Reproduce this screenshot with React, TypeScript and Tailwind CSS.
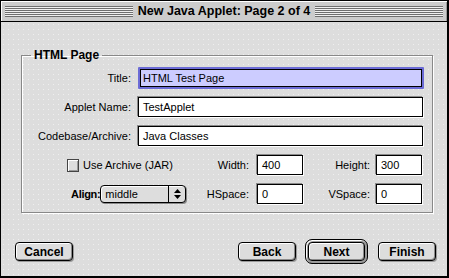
import { FC, ReactNode } from "react";

const sans = "font-['Liberation_Sans',Arial,sans-serif]";

const Stripes: FC = () => (
  <div className="flex-1 h-[11px] bg-[repeating-linear-gradient(to_bottom,#6f6f6f_0px,#6f6f6f_1px,#f0f0f0_1px,#f0f0f0_2px)]" />
);

interface FieldProps {
  value: string;
  className: string;
}

const Field: FC<FieldProps> = ({ value, className }) => (
  <div
    className={`h-[20px] border border-black bg-white shadow-[-1px_-1px_0_#8a8a8a,1px_1px_0_#ffffff] flex items-center pl-[4px] text-[11px] text-black ${className}`}
  >
    {value}
  </div>
);

const Label: FC<{ children: ReactNode; className: string }> = ({ children, className }) => (
  <div className={`text-right text-[11px] text-black ${className}`}>{children}</div>
);

interface ButtonProps {
  label: string;
  className: string;
}

const MacButton: FC<ButtonProps> = ({ label, className }) => (
  <div
    className={`h-[19px] border border-black rounded-[4px] bg-[#dddddd] shadow-[inset_1px_1px_0_#ffffff,inset_-1px_-1px_0_#8a8a8a,1px_1px_0_#9a9a9a] flex items-center justify-center font-bold text-[12px] text-black ${className}`}
  >
    {label}
  </div>
);

export default function App() {
  return (
    <div
      className={`${sans} w-[449px] h-[278px] border border-black border-r-2 border-b-2 bg-[#dddddd] flex flex-col overflow-hidden`}
    >
      {/* title bar */}
      <div className="h-[21px] shrink-0 border-b border-black bg-[#cccccc] shadow-[inset_1px_1px_0_#ffffff,inset_-1px_0_0_#999999] flex items-center gap-[5px] px-[4px]">
        <Stripes />
        <div className="font-bold text-[12.5px] text-black leading-none">New Java Applet: Page 2 of 4</div>
        <Stripes />
      </div>

      {/* body */}
      <div className="flex-1 flex flex-col bg-[#dddddd] bg-[radial-gradient(circle,#efefef_0.6px,transparent_0.9px)] bg-[length:5px_5px]">
        <fieldset className="mt-[26px] ml-[20px] w-[412px] border border-[#888888] shadow-[1px_1px_0_#ffffff,inset_1px_1px_0_#ffffff] px-0 pb-[8px] pt-0">
          <legend className="ml-[9px] px-[3px] font-bold text-[12px] leading-[14px] text-black">HTML Page</legend>

          <div className="mt-[5px] flex items-center">
            <Label className="w-[110px] pr-[1px]">Title:</Label>
            <div className="ml-[6px] w-[286px] h-[22px] border-2 border-[#6b6bd6] rounded-[1px]">
              <div className="h-full border border-black bg-[#ccccff] flex items-center pl-[2px] text-[11px] text-black">
                HTML Test Page
              </div>
            </div>
          </div>

          <div className="mt-[8px] flex items-center">
            <Label className="w-[110px] pr-[1px]">Applet Name:</Label>
            <Field value="TestApplet" className="ml-[6px] w-[285px]" />
          </div>

          <div className="mt-[9px] flex items-center">
            <Label className="w-[110px] pr-[1px]">Codebase/Archive:</Label>
            <Field value="Java Classes" className="ml-[6px] w-[285px]" />
          </div>

          <div className="mt-[9px] flex items-center">
            <div className="w-[168px] pl-[45px] flex items-center gap-[4px]">
              <div className="w-[12px] h-[13px] border border-[#444444] bg-[#dddddd] shadow-[inset_1px_1px_0_#ffffff,inset_-1px_-1px_0_#999999]" />
              <span className="text-[11px] text-black">Use Archive (JAR)</span>
            </div>
            <Label className="w-[59px]">Width:</Label>
            <Field value="400" className="ml-[8px] w-[46px]" />
            <Label className="w-[67px]">Height:</Label>
            <Field value="300" className="ml-[6px] w-[46px]" />
          </div>

          <div className="mt-[9px] flex items-center">
            <div className="w-[168px] pl-[49px] flex items-center">
              <span className="font-bold text-[11px] tracking-[-0.3px] text-black">Align:</span>
              <div className="w-[86px] h-[18px] border border-black rounded-[4px] bg-[#dddddd] shadow-[inset_1px_1px_0_#ffffff,1px_1px_0_#888888] flex items-center">
                <span className="flex-1 pl-[4px] text-[11px] text-black">middle</span>
                <div className="w-[17px] h-full border-l border-black flex items-center justify-center">
                  <svg width="7" height="10" viewBox="0 0 7 10">
                    <path d="M3.5 0 L7 4 L0 4 Z" fill="#000" />
                    <path d="M3.5 10 L7 6 L0 6 Z" fill="#000" />
                  </svg>
                </div>
              </div>
            </div>
            <Label className="w-[59px]">HSpace:</Label>
            <Field value="0" className="ml-[8px] w-[46px]" />
            <Label className="w-[67px]">VSpace:</Label>
            <Field value="0" className="ml-[6px] w-[46px]" />
          </div>
        </fieldset>

        {/* buttons */}
        <div className="mt-[26px] flex items-center justify-between pl-[14px] pr-[11px]">
          <MacButton label="Cancel" className="w-[58px]" />
          <div className="flex items-center">
            <MacButton label="Back" className="w-[58px]" />
            <div className="ml-[9px] w-[63px] h-[25px] border border-black rounded-[7px] bg-[#9a9a9a] shadow-[inset_1px_1px_0_#ffffff] p-[2px]">
              <MacButton label="Next" className="w-full" />
            </div>
            <MacButton label="Finish" className="ml-[10px] w-[58px]" />
          </div>
        </div>
      </div>
    </div>
  );
}
